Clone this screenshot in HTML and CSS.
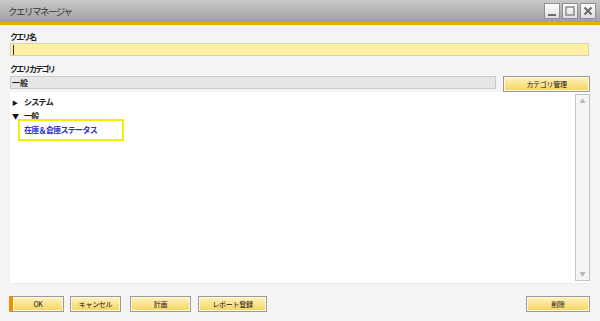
FILE: index.html
```html
<!DOCTYPE html>
<html lang="ja">
<head>
    <meta charset="UTF-8">
    <title>クエリマネージャ</title>
    <link rel="stylesheet" href="styles.css">
</head>
<body>
    <div class="window">
        <div class="titlebar">
            <span class="title">クエリマネージャ</span>
            <div class="win-buttons">
                <span class="win-btn"><svg width="12" height="12" viewBox="0 0 12 12"><rect x="2" y="9" width="8" height="2" fill="#6a6a6a"/></svg></span>
                <span class="win-btn"><svg width="12" height="12" viewBox="0 0 12 12"><rect x="2" y="2" width="8" height="8" fill="none" stroke="#8a8a8a" stroke-width="1.5"/></svg></span>
                <span class="win-btn"><svg width="12" height="12" viewBox="0 0 12 12"><path d="M2.5 2.5 L9.5 9.5 M9.5 2.5 L2.5 9.5" stroke="#6a6a6a" stroke-width="2"/></svg></span>
            </div>
        </div>
        <div class="content">
            <label class="field-label">クエリ名</label>
            <div class="input-name"><span class="caret"></span></div>

            <label class="field-label">クエリカテゴリ</label>
            <div class="category-row">
                <div class="input-category">一般</div>
                <button class="btn btn-manage">カテゴリ管理</button>
            </div>

            <div class="tree-panel">
                <div class="tree">
                    <div class="node"><span class="arrow">&#9654;</span>システム</div>
                    <div class="node"><span class="arrow down">&#9660;</span>一般</div>
                    <div class="leaf"><span class="leaf-text">在庫＆倉庫ステータス</span></div>
                </div>
                <div class="scrollbar">
                    <span class="sb-arrow">&#9650;</span>
                    <span class="sb-arrow">&#9660;</span>
                </div>
            </div>

            <div class="button-bar">
                <div class="button-group">
                    <button class="btn btn-ok">OK</button>
                    <button class="btn btn-cancel">キャンセル</button>
                    <button class="btn btn-plan">計画</button>
                    <button class="btn btn-report">レポート登録</button>
                </div>
                <button class="btn btn-delete">削除</button>
            </div>
        </div>
    </div>
</body>
</html>
```

FILE: styles.css
```css
body {
    margin: 0;
    padding: 0;
    font-family: "Noto Sans CJK JP", "DejaVu Sans", sans-serif;
    font-size: 8px;
    color: #222;
    background: #f4f4f4;
}
.window {
    width: 600px;
    height: 321px;
    display: flex;
    flex-direction: column;
    background: #f4f4f4;
    overflow: hidden;
}
.titlebar {
    height: 22px;
    display: flex;
    align-items: center;
    justify-content: space-between;
    padding: 0 4px 0 8px;
    background: linear-gradient(#c9c9c9, #9f9f9f);
    border-bottom: 3px solid #f2a900;
}
.title {
    font-size: 9.5px;
    letter-spacing: -1.5px;
    color: #333;
}
.win-buttons {
    display: flex;
    gap: 2px;
}
.win-btn {
    width: 16px;
    height: 16px;
    display: flex;
    align-items: center;
    justify-content: center;
    background: linear-gradient(#fdfdfd, #dedede);
    border: 1px solid #8f8f8f;
    box-sizing: border-box;
}
.content {
    flex: 1;
    display: flex;
    flex-direction: column;
    padding: 6px 10px 0 10px;
}
.field-label {
    font-size: 8px;
    letter-spacing: -1.7px;
    font-weight: bold;
    line-height: 11px;
    height: 11px;
    color: #222;
}
.input-name {
    height: 11px;
    margin: 1px 1px 7px 0;
    background: #fff0a6;
    border: 1px solid #d8d2a8;
    display: flex;
    align-items: center;
    padding-left: 2px;
}
.caret {
    width: 1px;
    height: 10px;
    background: #333;
}
.category-row {
    display: flex;
    gap: 6px;
    margin-top: 2px;
}
.input-category {
    flex: 1;
    height: 11px;
    line-height: 11px;
    margin-right: 1px;
    background: #e6e6e6;
    border: 1px solid #cacaca;
    padding-left: 1px;
    font-weight: bold;
    font-size: 8px;
}
.btn {
    font-family: "Noto Sans CJK JP", "DejaVu Sans", sans-serif;
    font-size: 7px;
    letter-spacing: -0.3px;
    height: 16px;
    padding: 0;
    color: #111;
    background: linear-gradient(#fff3c0, #f5d45e);
    border: 1px solid #9a9a9a;
    box-shadow: inset 0 0 0 1px #fff8dc;
    cursor: pointer;
}
.btn-manage {
    width: 87px;
}
.tree-panel {
    height: 191px;
    display: flex;
    background: #fff;
    border-bottom: 1px solid #ececec;
}
.tree {
    flex: 1;
    padding: 3px 0 0 2px;
}
.node {
    height: 14px;
    line-height: 14px;
    font-size: 8px;
    font-weight: bold;
    letter-spacing: -0.7px;
    color: #1a1a1a;
}
.arrow {
    display: inline-block;
    width: 12px;
    font-size: 6px;
    color: #111;
}
.arrow.down {
    font-size: 7px;
}
.leaf {
    margin-top: -4px;
    padding-left: 6px;
}
.leaf-text {
    display: inline-block;
    height: 18px;
    line-height: 18px;
    padding: 0 25px 0 4px;
    border: 2px solid #f2ef00;
    color: #2a32c8;
    font-size: 8px;
    font-weight: bold;
    letter-spacing: -0.7px;
}
.scrollbar {
    width: 13px;
    margin: 2px 0 2px 0;
    display: flex;
    flex-direction: column;
    justify-content: space-between;
    align-items: center;
    background: #f5f5f5;
    border: 1px solid #c4c4c4;
}
.sb-arrow {
    font-size: 6px;
    color: #b8b8b8;
    line-height: 12px;
}
.button-bar {
    display: flex;
    justify-content: space-between;
    align-items: center;
    margin-top: 12px;
}
.button-group {
    display: flex;
    margin-left: -1px;
}
.btn-ok {
    width: 55px;
    border-left: 4px solid #f09000;
}
.btn-cancel {
    width: 51px;
    margin-left: 6px;
}
.btn-plan {
    width: 61px;
    margin-left: 9px;
}
.btn-report {
    width: 69px;
    margin-left: 7px;
}
.btn-delete {
    width: 64px;
}
```
